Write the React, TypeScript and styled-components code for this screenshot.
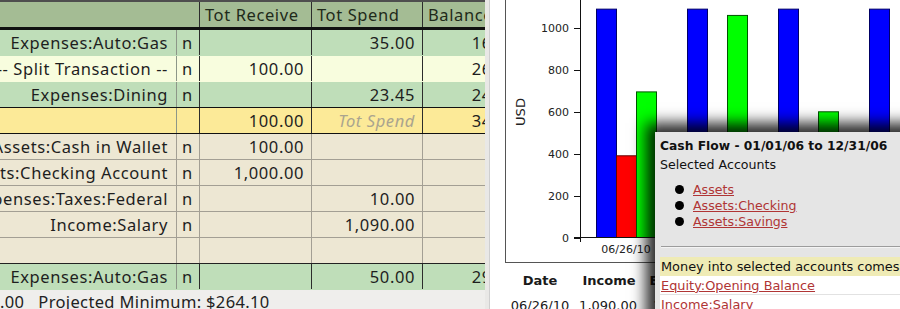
import React from "react";
import styled, { createGlobalStyle } from "styled-components";

const GlobalStyle = createGlobalStyle`
  html, body { margin: 0; padding: 0; background: #ffffff; }
  body { width: 900px; height: 309px; overflow: hidden; }
`;

const Screen = styled.div`
  display: flex;
  width: 900px;
  height: 309px;
  overflow: hidden;
`;

/* ---------------- Left: register ---------------- */

const LeftPane = styled.div`
  width: 485px;
  flex: none;
  display: flex;
  flex-direction: column;
  overflow: hidden;
  font-family: "Noto Sans", "Open Sans", sans-serif;
  font-size: 16.5px;
  letter-spacing: 0.6px;
  color: #1e1e1e;
`;

const Register = styled.div`
  display: flex;
  flex-direction: column;
  width: 535px;
`;

const HeaderRow = styled.div`
  display: flex;
  height: 30px;
  box-sizing: border-box;
  border-top: 2px solid #4e4e4e;
  border-bottom: 3px solid #111;
  background: #a4bc94;
`;

type Variant = "primary" | "secondary" | "cursor" | "split";

const rowBg: Record<Variant, string> = {
  primary: "#bfdeb9",
  secondary: "#f8fdde",
  cursor: "#fcea98",
  split: "#ede7d3",
};

const Row = styled.div<{ $v: Variant; $bottom?: string }>`
  display: flex;
  height: 26px;
  box-sizing: border-box;
  background: ${(p) => rowBg[p.$v]};
  border-bottom: 1px solid ${(p) => p.$bottom ?? rowBg[p.$v]};
`;

const Cell = styled.div<{
  $w: number;
  $align?: "left" | "right" | "center";
  $line?: string;
  $padR?: number;
}>`
  flex: none;
  width: ${(p) => p.$w}px;
  box-sizing: border-box;
  display: flex;
  align-items: center;
  justify-content: ${(p) =>
    p.$align === "right" ? "flex-end" : p.$align === "center" ? "center" : "flex-start"};
  padding: 0 ${(p) => p.$padR ?? 7}px 0 5px;
  border-right: 1px solid ${(p) => p.$line ?? "transparent"};
  overflow: hidden;
  white-space: nowrap;
`;

const HeadCell = styled(Cell)`
  color: #1f2a1a;
`;

const Placeholder = styled.span`
  font-style: italic;
  color: #aaa48f;
`;

const StatusBar = styled.div`
  flex: 1;
  display: flex;
  align-items: center;
  gap: 14px;
  background: #efeeec;
  color: #222;
  white-space: nowrap;
  letter-spacing: 0.35px;
`;

const StatusItem = styled.span``;

const Divider = styled.div`
  width: 5px;
  flex: none;
  box-sizing: border-box;
  background: #e9e8e6;
  border-right: 1px solid #cfcfcf;
`;

/* ---------------- Right: report ---------------- */

const RightPane = styled.div`
  flex: 1;
  position: relative;
  display: flex;
  flex-direction: column;
  padding-left: 15px;
  background: #ffffff;
  overflow: hidden;
  font-family: "DejaVu Sans", "Liberation Sans", sans-serif;
  color: #1a1a1a;
`;

const ChartFrame = styled.div`
  flex: none;
  height: 263px;
  box-sizing: border-box;
  border-left: 1px solid #555;
  border-bottom: 1px solid #555;
  svg { display: block; }
`;

const SummaryGrid = styled.div`
  display: grid;
  grid-template-columns: 70px 68px 74px;
  grid-auto-rows: 25px;
  margin-top: 5px;
  font-size: 13px;
`;

const SumHead = styled.div`
  display: flex;
  align-items: center;
  justify-content: center;
  font-weight: bold;
  white-space: nowrap;
`;

const SumCell = styled.div<{ $align: "center" | "right" }>`
  display: flex;
  align-items: center;
  justify-content: ${(p) => (p.$align === "right" ? "flex-end" : "center")};
  padding-right: ${(p) => (p.$align === "right" ? 6 : 0)}px;
  white-space: nowrap;
`;

const Popup = styled.div`
  position: absolute;
  left: 165px;
  top: 132px;
  width: 280px;
  height: 200px;
  box-sizing: border-box;
  padding: 5px 0 0 5px;
  background: #e5e5e5;
  box-shadow: -3px -3px 14px 6px rgba(0, 0, 0, 0.85);
  font-size: 12.6px;
  color: #111;
  white-space: nowrap;
`;

const PopTitle = styled.div`
  font-weight: bold;
  font-size: 12.3px;
  line-height: 18px;
`;

const PopText = styled.div`
  line-height: 18px;
  margin-top: 1px;
`;

const BulletList = styled.ul`
  list-style: none;
  margin: 7px 0 0 0;
  padding: 0;
`;

const Bullet = styled.li`
  display: flex;
  align-items: center;
  height: 16px;
  &::before {
    content: "";
    width: 9px;
    height: 9px;
    margin: 0 9px 0 15px;
    border-radius: 50%;
    background: #000;
  }
`;

const Link = styled.a`
  color: #b03535;
  text-decoration: underline;
`;

const Rule = styled.div`
  height: 2px;
  margin: 17px 0 0 1px;
  background: #9c9c9c;
  border-bottom: 1px solid #f4f4f4;
  box-sizing: border-box;
`;

const FlowTable = styled.div`
  margin-top: 9px;
  display: flex;
  flex-direction: column;
  font-size: 12.9px;
`;

const FlowRow = styled.div<{ $hi?: boolean }>`
  height: 19px;
  box-sizing: border-box;
  display: flex;
  align-items: center;
  padding-left: 1px;
  background: ${(p) => (p.$hi ? "#efebb5" : "#ffffff")};
  border-bottom: 1px solid ${(p) => (p.$hi ? "#efebb5" : "#e2e2e2")};
`;

/* ---------------- Chart ---------------- */

const yOf = (v: number) => 237.5 - v * 0.2095;
const ticks = [0, 200, 400, 600, 800, 1000];
const groups = [
  { x: 90, values: [1090, 390, 695] },
  { x: 181, values: [1090, 0, 1060] },
  { x: 272, values: [1090, 0, 600] },
  { x: 363, values: [1090, 0, 0] },
];
const barColors = [
  { fill: "#0000ff", stroke: "#000066" },
  { fill: "#ff0000", stroke: "#660000" },
  { fill: "#00ff00", stroke: "#005500" },
];

function CashChart() {
  return (
    <svg width={394} height={262} viewBox="0 0 394 262">
      {groups.map((g) =>
        g.values.map((v, i) =>
          v > 0 ? (
            <rect
              key={`${g.x}-${i}`}
              x={g.x + i * 20 + 0.5}
              y={yOf(v)}
              width={20}
              height={237.5 - yOf(v)}
              fill={barColors[i].fill}
              stroke={barColors[i].stroke}
              strokeWidth={1}
            />
          ) : null
        )
      )}
      <line x1={74.5} y1={0} x2={74.5} y2={242} stroke="#111" strokeWidth={1} />
      <line x1={68} y1={237.5} x2={394} y2={237.5} stroke="#111" strokeWidth={1} />
      {ticks.map((t) => (
        <g key={t}>
          <line x1={68} y1={Math.round(yOf(t)) + 0.5} x2={74.5} y2={Math.round(yOf(t)) + 0.5} stroke="#111" />
          <text
            x={63}
            y={Math.round(yOf(t)) + 0.5}
            textAnchor="end"
            dominantBaseline="central"
            fontSize={11}
            fill="#222"
            fontFamily="DejaVu Sans, sans-serif"
          >
            {t}
          </text>
        </g>
      ))}
      <text
        x={120}
        y={249}
        textAnchor="middle"
        dominantBaseline="central"
        fontSize={11}
        fill="#222"
        fontFamily="DejaVu Sans, sans-serif"
      >
        06/26/10
      </text>
      <text
        x={14}
        y={112}
        transform="rotate(-90 14 112)"
        textAnchor="middle"
        dominantBaseline="central"
        fontSize={13}
        fill="#222"
        fontFamily="DejaVu Sans, sans-serif"
      >
        USD
      </text>
    </svg>
  );
}

/* ---------------- Data ---------------- */

type RegRow = {
  v: Variant;
  bottom?: string;
  account: string;
  rec: string;
  receive: string;
  spend: string;
  spendPlaceholder?: boolean;
  balance: string;
};

const DARK = "#2c2c2c";
const GRAY = "#a39f94";

const rows: RegRow[] = [
  { v: "primary", account: "Expenses:Auto:Gas", rec: "n", receive: "", spend: "35.00", balance: "165.00" },
  { v: "secondary", account: "-- Split Transaction --", rec: "n", receive: "100.00", spend: "", balance: "265.00" },
  { v: "primary", bottom: "#111", account: "Expenses:Dining", rec: "n", receive: "", spend: "23.45", balance: "241.55" },
  { v: "cursor", bottom: "#111", account: "", rec: "", receive: "100.00", spend: "Tot Spend", spendPlaceholder: true, balance: "341.55" },
  { v: "split", bottom: GRAY, account: "Assets:Cash in Wallet", rec: "n", receive: "100.00", spend: "", balance: "" },
  { v: "split", bottom: GRAY, account: "Assets:Checking Account", rec: "n", receive: "1,000.00", spend: "", balance: "" },
  { v: "split", bottom: GRAY, account: "Expenses:Taxes:Federal", rec: "n", receive: "", spend: "10.00", balance: "" },
  { v: "split", bottom: GRAY, account: "Income:Salary", rec: "n", receive: "", spend: "1,090.00", balance: "" },
  { v: "split", bottom: "#222", account: "", rec: "", receive: "", spend: "", balance: "" },
  { v: "primary", account: "Expenses:Auto:Gas", rec: "n", receive: "", spend: "50.00", balance: "291.55" },
];

export default function App() {
  return (
    <>
      <GlobalStyle />
      <Screen>
        <LeftPane>
          <Register>
            <HeaderRow>
              <HeadCell $w={200} $line={DARK} />
              <HeadCell $w={112} $line={DARK}>Tot Receive</HeadCell>
              <HeadCell $w={111} $line={DARK}>Tot Spend</HeadCell>
              <HeadCell $w={112}>Balance</HeadCell>
            </HeaderRow>
            {rows.map((r, i) => {
              const line = r.v === "split" ? GRAY : DARK;
              const acctLine = r.v === "split" ? GRAY : "#8d9788";
              return (
                <Row key={i} $v={r.v} $bottom={r.bottom}>
                  <Cell $w={177} $align="right" $line={acctLine} $padR={8}>
                    {r.account}
                  </Cell>
                  <Cell $w={23} $align="left" $line={line}>
                    {r.rec}
                  </Cell>
                  <Cell $w={112} $align="right" $line={line}>
                    {r.receive}
                  </Cell>
                  <Cell $w={111} $align="right" $line={line}>
                    {r.spendPlaceholder ? <Placeholder>{r.spend}</Placeholder> : r.spend}
                  </Cell>
                  <Cell $w={112} $align="right">
                    {r.balance}
                  </Cell>
                </Row>
              );
            })}
          </Register>
          <StatusBar>
            <StatusItem>.00</StatusItem>
            <StatusItem>Projected Minimum: $264.10</StatusItem>
          </StatusBar>
        </LeftPane>
        <Divider />
        <RightPane>
          <ChartFrame>
            <CashChart />
          </ChartFrame>
          <SummaryGrid>
            <SumHead>Date</SumHead>
            <SumHead>Income</SumHead>
            <SumHead>Expense</SumHead>
            <SumCell $align="center">06/26/10</SumCell>
            <SumCell $align="right">1,090.00</SumCell>
            <SumCell $align="right">1,090.00</SumCell>
          </SummaryGrid>
          <Popup>
            <PopTitle>Cash Flow - 01/01/06 to 12/31/06</PopTitle>
            <PopText>Selected Accounts</PopText>
            <BulletList>
              <Bullet><Link>Assets</Link></Bullet>
              <Bullet><Link>Assets:Checking</Link></Bullet>
              <Bullet><Link>Assets:Savings</Link></Bullet>
            </BulletList>
            <Rule />
            <FlowTable>
              <FlowRow $hi>Money into selected accounts comes from</FlowRow>
              <FlowRow><Link>Equity:Opening Balance</Link></FlowRow>
              <FlowRow><Link>Income:Salary</Link></FlowRow>
            </FlowTable>
          </Popup>
        </RightPane>
      </Screen>
    </>
  );
}
